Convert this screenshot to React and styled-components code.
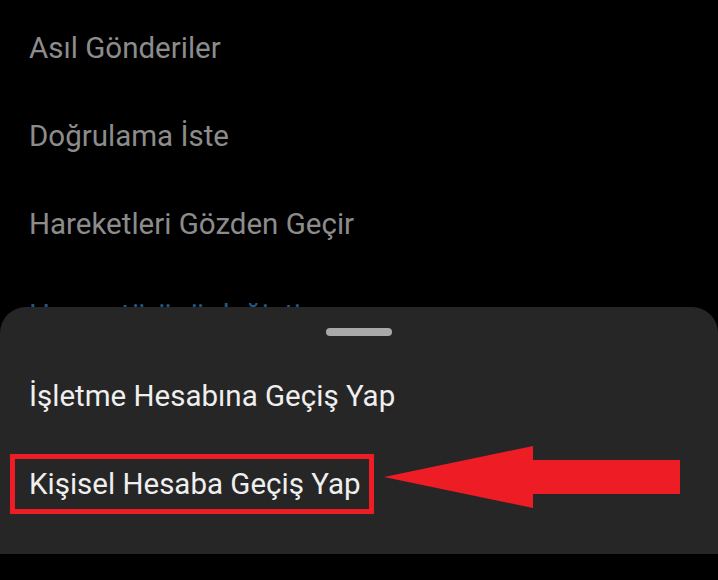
import React from "react";
import styled, { createGlobalStyle } from "styled-components";

const Global = createGlobalStyle`
  html, body { margin: 0; padding: 0; background: #000; }
  body { font-family: Roboto, "Noto Sans", sans-serif; }
`;

const Screen = styled.div`
  width: 718px;
  height: 580px;
  background: #000;
  display: flex;
  flex-direction: column;
  overflow: hidden;
`;

const Menu = styled.div`
  height: 307px;
  flex: none;
  overflow: hidden;
  padding-top: 4px;
  box-sizing: border-box;
`;

const MenuItem = styled.div`
  height: 88px;
  line-height: 88px;
  padding-left: 29px;
  padding-top: ${(p) => (p.$link ? "3px" : "0")};
  font-size: 29.5px;
  color: ${(p) => (p.$link ? "#215a86" : "#8c8c8c")};
  white-space: nowrap;
`;

const Sheet = styled.div`
  flex: none;
  height: 247px;
  box-sizing: border-box;
  background: #262626;
  border-radius: 26px 26px 0 0;
  padding-top: 21px;
  display: flex;
  flex-direction: column;
`;

const Handle = styled.div`
  align-self: center;
  width: 66px;
  height: 8px;
  border-radius: 4px;
  background: #a9a9a9;
  margin-bottom: 16px;
`;

const SheetRow = styled.div`
  height: 88px;
  display: flex;
  align-items: center;
  padding-left: ${(p) => (p.$boxed ? "10px" : "29px")};
  font-size: 29.5px;
  color: #efefef;
  white-space: nowrap;
`;

const Highlight = styled.div`
  box-sizing: border-box;
  height: 60px;
  width: 364px;
  border: 5px solid #ee1c25;
  display: flex;
  align-items: center;
  padding-left: 14px;
`;

const Arrow = styled.svg`
  flex: none;
  margin-left: 10px;
  margin-top: -14px;
`;

export default function App() {
  return (
    <>
      <Global />
      <Screen>
        <Menu>
          <MenuItem>Asıl Gönderiler</MenuItem>
          <MenuItem>Doğrulama İste</MenuItem>
          <MenuItem>Hareketleri Gözden Geçir</MenuItem>
          <MenuItem $link>Hesap türünü değiştir</MenuItem>
        </Menu>
        <Sheet>
          <Handle />
          <SheetRow>İşletme Hesabına Geçiş Yap</SheetRow>
          <SheetRow $boxed>
            <Highlight>Kişisel Hesaba Geçiş Yap</Highlight>
            <Arrow width="296" height="62" viewBox="0 0 296 62">
              <polygon
                points="0,31 149,0 149,14 296,14 296,48 149,48 149,62"
                fill="#ee1c25"
              />
            </Arrow>
          </SheetRow>
        </Sheet>
      </Screen>
    </>
  );
}
